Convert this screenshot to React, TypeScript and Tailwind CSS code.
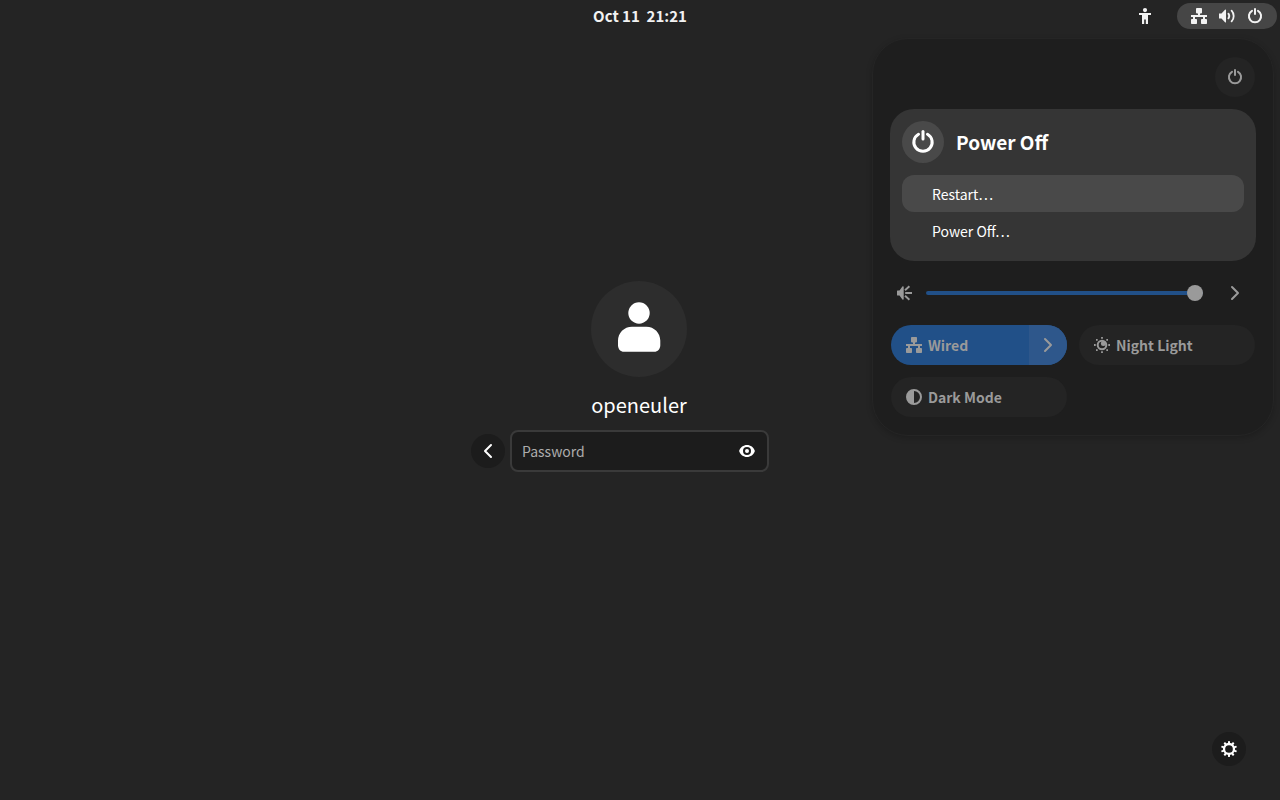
import React, { useState } from 'react';

type IconProps = { className?: string };

function Svg({ className = 'size-4', children }: IconProps & { children: React.ReactNode }) {
  return (
    <svg viewBox="0 0 16 16" className={className} fill="currentColor" aria-hidden="true">
      {children}
    </svg>
  );
}

const AccessibilityIcon = () => (
  <Svg>
    <circle cx="8" cy="2.1" r="2.1" />
    <path d="M2 5h12v2h-3v9H8.8v-4.5H7.2V16H5V7H2z" />
  </Svg>
);

const WiredIcon = () => (
  <Svg>
    <rect x="5" y="0" width="6" height="5.4" rx="0.8" />
    <path d="M7 5h2v2h7v2h-2v2.5h-2V9H4v2.5H2V9H0V7h7z" />
    <rect x="0" y="11" width="6" height="5" rx="0.8" />
    <rect x="10" y="11" width="6" height="5" rx="0.8" />
  </Svg>
);

const VolumeIcon = () => (
  <Svg>
    <path d="M0 5.5h2.5L6 1.8c.4-.4 1-.3 1 .3v11.8c0 .6-.6.7-1 .3l-3.5-3.7H0z" />
    <g fill="none" stroke="currentColor" strokeWidth="1.8" strokeLinecap="round">
      <path d="M9.4 5.6a4 4 0 0 1 0 4.8" />
      <path d="M12.6 2.6a8 8 0 0 1 0 10.8" />
    </g>
  </Svg>
);

const SpeakerIcon = () => (
  <Svg>
    <path d="M1 6q0-.5.5-.5h2l2.900-3.900c.5-.5 1.300-.3 1.300.3v12.200c0 .6-.8.8-1.300.3l-2.900-3.900h-2q-.5 0-.5-.5z" />
    <path d="M9.200 8H16M9 5.200l4.400-4M9 10.800l4.400 4" fill="none" stroke="currentColor" strokeWidth="1.900" />
  </Svg>
);

const PowerIcon = ({ className }: IconProps) => (
  <Svg className={className}>
    <g fill="none" stroke="currentColor" strokeWidth="2" strokeLinecap="round">
      <path d="M5 2.800a6.100 6.100 0 1 0 6 0" />
      <path d="M8 1v5" />
    </g>
  </Svg>
);

const ChevronRight = () => (
  <Svg>
    <path d="M5 2l6 6-6 6" fill="none" stroke="currentColor" strokeWidth="2" strokeLinecap="round" strokeLinejoin="round" />
  </Svg>
);

const ChevronLeft = () => (
  <Svg>
    <path d="M11 2L5 8l6 6" fill="none" stroke="currentColor" strokeWidth="2" strokeLinecap="round" strokeLinejoin="round" />
  </Svg>
);

const NightLightIcon = () => (
  <Svg>
    <circle cx="8" cy="8" r="4.300" fill="none" stroke="currentColor" strokeWidth="2" />
    <circle cx="9.400" cy="6.600" r="2.500" />
    <path d="M7.100 0h1.800v1.700H7.100zM7.100 14.300h1.800V16H7.100zM0 7.100h1.700v1.800H0zM14.300 7.100H16v1.800h-1.700zM2 2h1.700v1.700H2zM12.300 2H14v1.700h-1.700zM2 12.300h1.700V14H2zM12.300 12.300H14V14h-1.700z" />
  </Svg>
);

const DarkModeIcon = () => (
  <Svg>
    <path fillRule="evenodd" d="M8 0a8 8 0 1 0 0 16A8 8 0 0 0 8 0zm0 2a6 6 0 0 1 0 12z" />
  </Svg>
);

const EyeIcon = () => (
  <Svg>
    <path
      fillRule="evenodd"
      d="M8 2C4.500 2 1.200 4.300.100 8c1.100 3.700 4.400 6 7.900 6s6.800-2.300 7.900-6C14.800 4.300 11.500 2 8 2zm0 2a4 4 0 1 1 0 8a4 4 0 0 1 0-8z"
    />
    <circle cx="8" cy="8" r="2" />
  </Svg>
);

const TEETH = [0, 36, 72, 108, 144, 180, 216, 252, 288, 324];

const GearIcon = () => (
  <Svg>
    <circle cx="8" cy="8" r="5" fill="none" stroke="currentColor" strokeWidth="2.300" />
    {TEETH.map((angle) => (
      <rect key={angle} x="7" y="0" width="2" height="3" rx="0.4" transform={`rotate(${angle} 8 8)`} />
    ))}
  </Svg>
);

const Avatar = () => (
  <svg viewBox="0 0 96 96" className="size-24 rounded-full bg-[#2d2d2d]" fill="white" role="img" aria-label="User picture">
    <circle cx="48" cy="32" r="10.700" />
    <path d="M41 45.700h14.300c8 0 14 6.300 14 14v4.500c0 3.800-2.600 6.500-6 6.500H33c-3.500 0-6-2.700-6-6.500v-4.500c0-7.700 6-14 14-14z" />
  </svg>
);

function TopBar() {
  return (
    <header className="grid h-8 grid-cols-[1fr_auto_1fr] items-center pr-[3px] text-[15px] font-bold text-[#f2f2f2]">
      <span />
      <button type="button" className="whitespace-pre pl-[3px] leading-5">Oct 11  21:21</button>
      <div className="flex items-center justify-end gap-6">
        <button type="button" aria-label="Accessibility"><AccessibilityIcon /></button>
        <button type="button" aria-label="System menu" className="flex h-[26px] items-center gap-3 rounded-full bg-[#464646] px-[14px]">
          <WiredIcon />
          <VolumeIcon />
          <PowerIcon />
        </button>
      </div>
    </header>
  );
}

function LoginForm() {
  const [password, setPassword] = useState('');
  return (
    <main className="flex flex-1 flex-col items-center justify-center pr-0.5 pb-[79px]">
      <Avatar />
      <h1 className="mt-3 text-xl leading-8 text-white">openeuler</h1>
      <form className="mt-[9px] flex w-[336px] items-center gap-[5px]" onSubmit={(e) => e.preventDefault()}>
        <button type="button" aria-label="Back" className="flex size-[34px] items-center justify-center rounded-full bg-[#1c1c1c] text-white">
          <ChevronLeft />
        </button>
        <div className="flex h-[42px] w-[259px] items-center rounded-lg border-2 border-[#3a3a3a] bg-[#1c1c1c] pr-3 pl-[10px]">
          <input
            type="password"
            aria-label="Password"
            placeholder="Password"
            value={password}
            onChange={(e) => setPassword(e.target.value)}
            className="min-w-0 flex-1 bg-transparent text-sm text-white outline-none placeholder:text-[#acacac]"
          />
          <button type="button" aria-label="Show password" className="text-white"><EyeIcon /></button>
        </div>
      </form>
    </main>
  );
}

function PowerOffCard() {
  return (
    <section className="rounded-3xl bg-[#353535] p-3 text-white">
      <div className="flex items-center gap-3">
        <span className="flex size-[42px] items-center justify-center rounded-full bg-[#494949]">
          <PowerIcon className="size-6" />
        </span>
        <h2 className="text-[19px] leading-6 font-bold">Power Off</h2>
      </div>
      <div className="mt-3 flex flex-col text-sm">
        <button type="button" className="h-[37px] rounded-xl bg-[#494949] px-[30px] text-left">Restart…</button>
        <button type="button" className="h-[37px] rounded-xl px-[30px] text-left">Power Off…</button>
      </div>
    </section>
  );
}

function QuickSettings() {
  const [volume, setVolume] = useState(100);
  return (
    <aside className="absolute top-[38px] right-1.5 flex w-[402px] flex-col gap-3 rounded-[36px] border border-[#252525] bg-[#1e1e1e] px-[17px] py-[18px] text-[#9a9a9a] shadow-[0_2px_6px_rgba(0,0,0,0.2)]">
      <div className="flex justify-end px-px">
        <button type="button" aria-label="Power" className="flex size-10 items-center justify-center rounded-full bg-[#242424]">
          <PowerIcon />
        </button>
      </div>
      <PowerOffCard />
      <div className="flex h-10 items-center px-px">
        <button type="button" aria-label="Mute" className="flex w-[26px] justify-center"><SpeakerIcon /></button>
        <input
          type="range"
          aria-label="Volume"
          min={0}
          max={100}
          value={volume}
          onChange={(e) => setVolume(Number(e.target.value))}
          className="mr-3 ml-[9px] h-1 min-w-0 flex-1 appearance-none rounded-full bg-[#215088] [&::-webkit-slider-thumb]:size-4 [&::-webkit-slider-thumb]:appearance-none [&::-webkit-slider-thumb]:rounded-full [&::-webkit-slider-thumb]:bg-[#9a9a9a]"
        />
        <button type="button" aria-label="Sound output" className="flex size-10 items-center justify-center"><ChevronRight /></button>
      </div>
      <div className="grid grid-cols-2 gap-3 px-px text-sm font-bold">
        <div className="flex h-10 overflow-hidden rounded-full bg-[#215088]">
          <button type="button" className="flex flex-1 items-center gap-1.5 pl-[15px]"><WiredIcon />Wired</button>
          <button type="button" aria-label="Wired settings" className="flex w-[38px] items-center justify-center bg-[#2e578b]"><ChevronRight /></button>
        </div>
        <button type="button" className="flex h-10 items-center gap-1.5 rounded-full bg-[#242424] pl-[15px]"><NightLightIcon />Night Light</button>
        <button type="button" className="flex h-10 items-center gap-1.5 rounded-full bg-[#242424] pl-[15px]"><DarkModeIcon />Dark Mode</button>
      </div>
    </aside>
  );
}

export default function App() {
  return (
    <div className="relative flex min-h-screen flex-col bg-[#242424] font-['Noto_Sans_CJK_SC','Noto_Sans',sans-serif]">
      <TopBar />
      <LoginForm />
      <QuickSettings />
      <button type="button" aria-label="Session settings" className="absolute right-[34px] bottom-[34px] flex size-[34px] items-center justify-center rounded-full bg-[#1c1c1c] text-white">
        <GearIcon />
      </button>
    </div>
  );
}
